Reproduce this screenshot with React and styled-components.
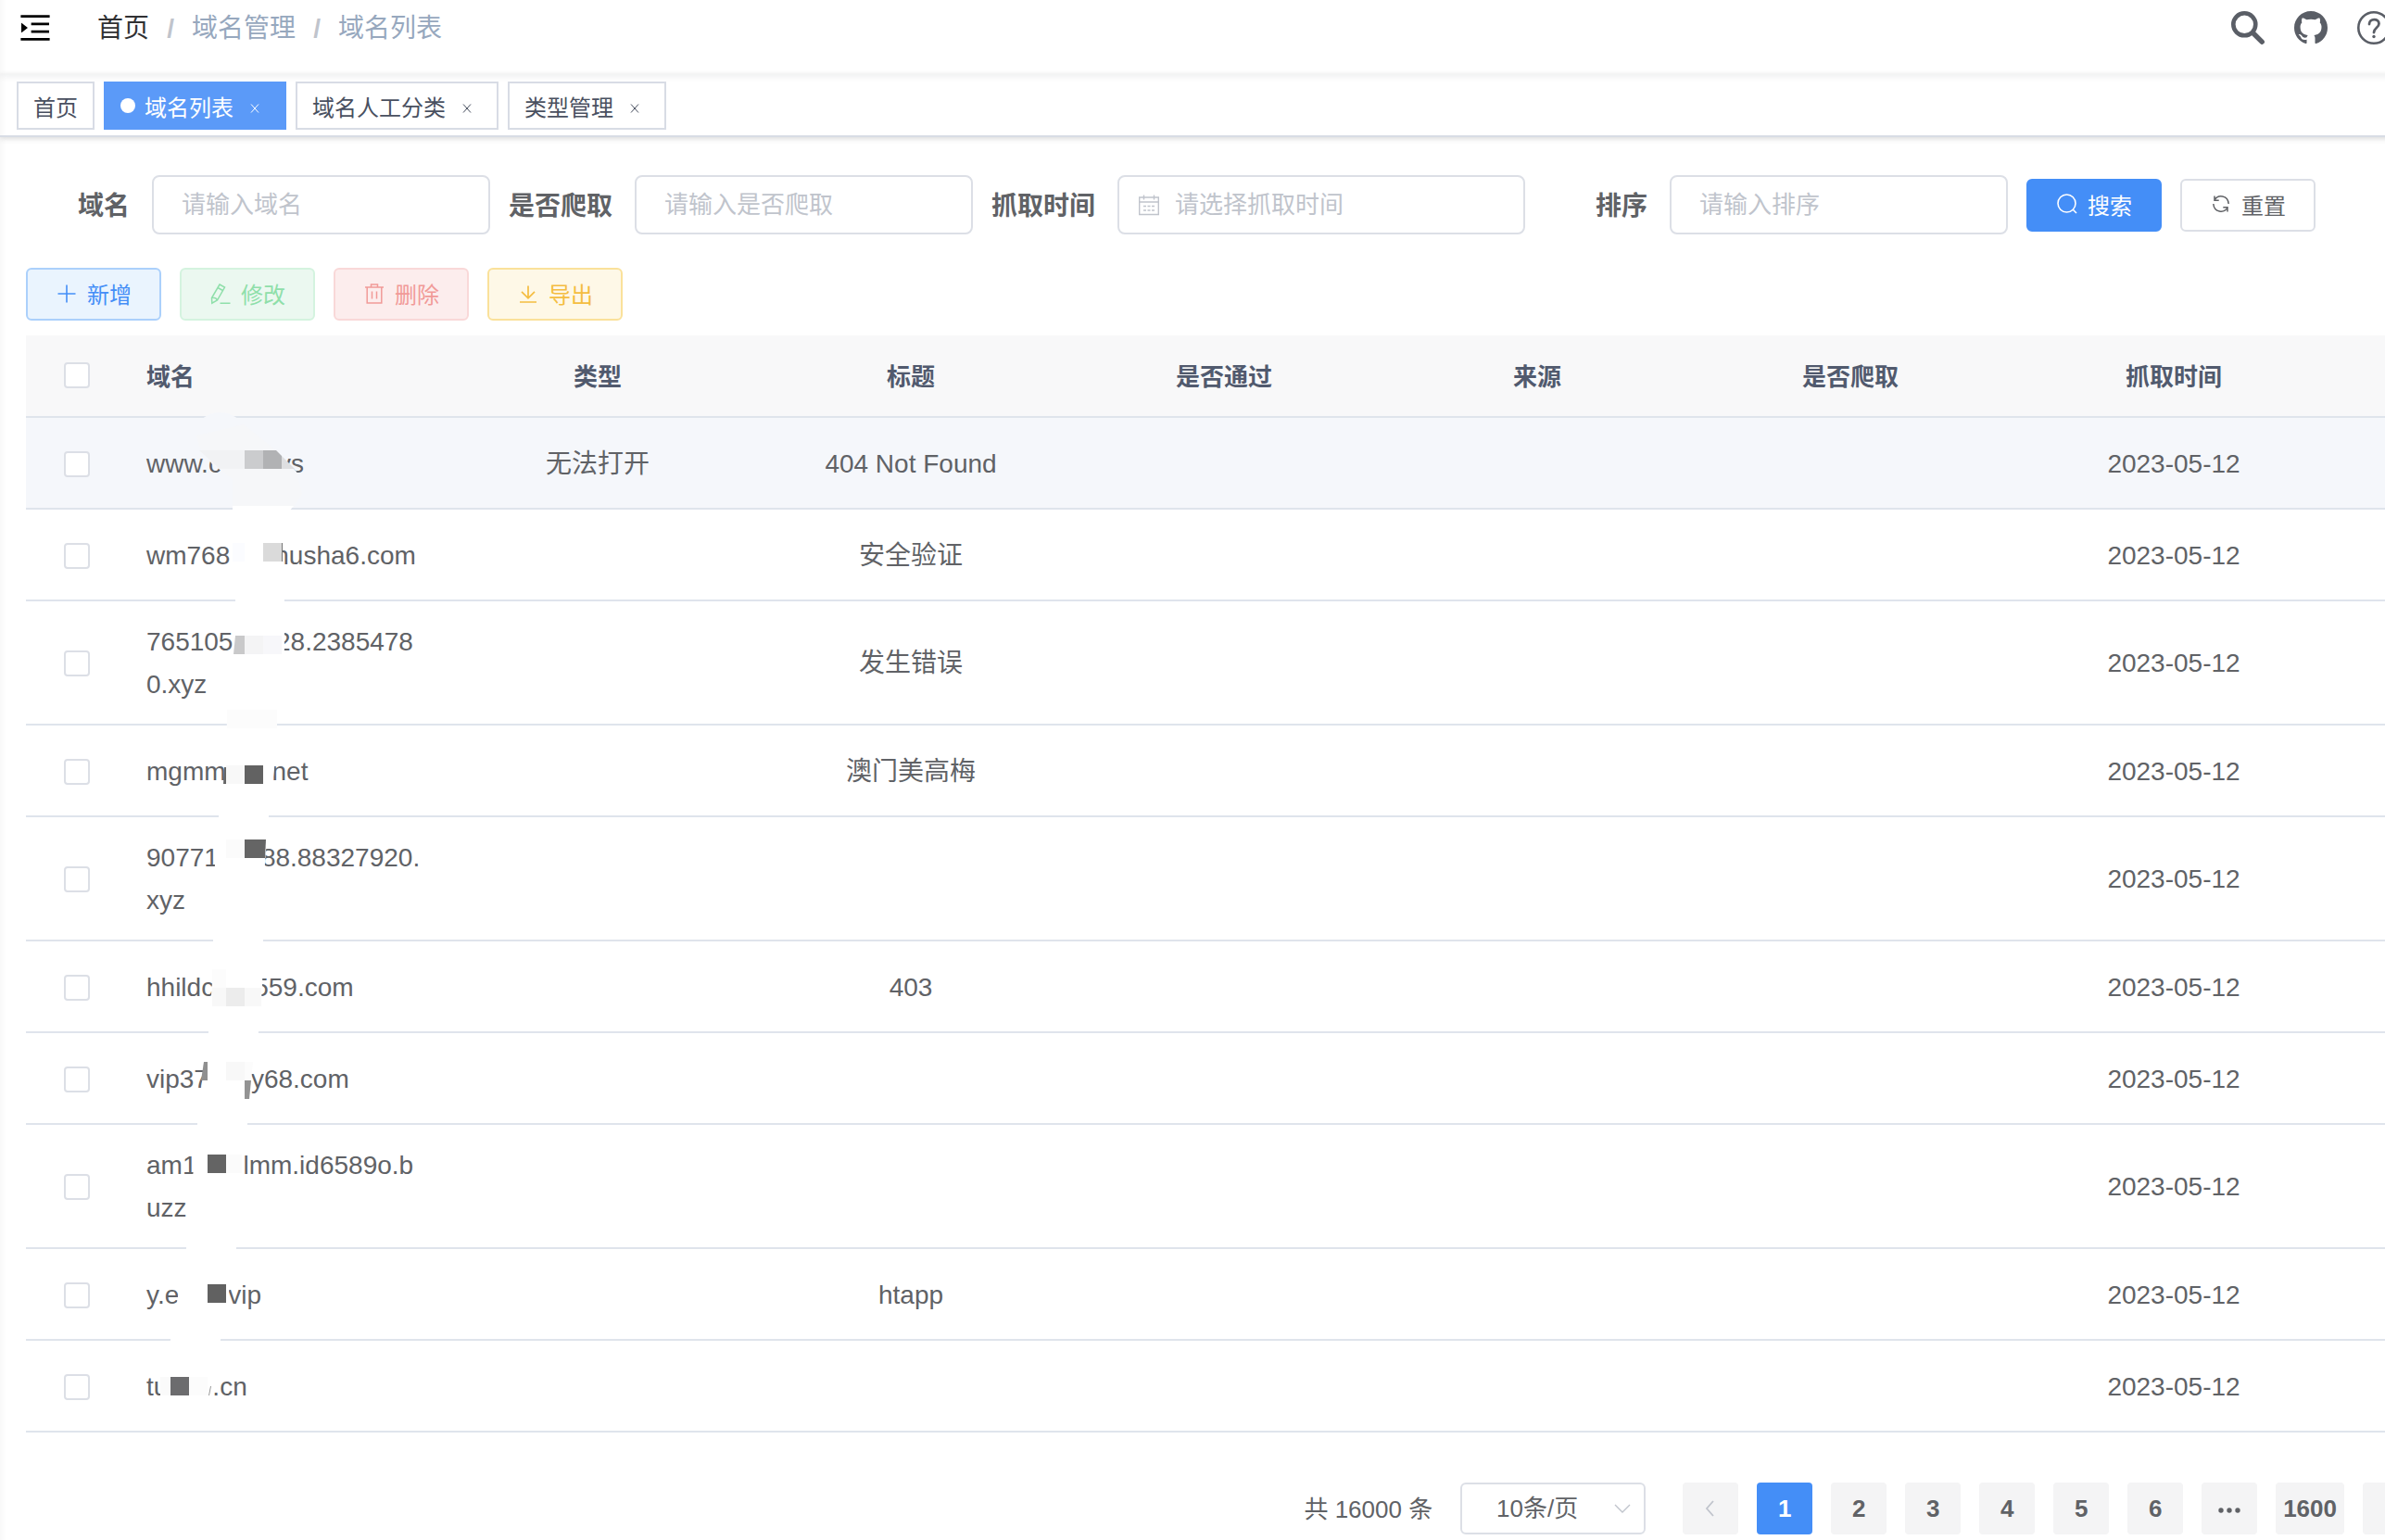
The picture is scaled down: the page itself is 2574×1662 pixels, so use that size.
import { useState } from "react";

import styled, { createGlobalStyle } from "styled-components";

const GlobalStyle = createGlobalStyle`
  * {
    box-sizing: border-box;
  }

  body {
    margin: 0;
    overflow: hidden;
    background-color: #fff;
    color: #606266;
    font-family: "Liberation Sans", "Noto Sans CJK SC", sans-serif;
    font-size: 28px;
  }

  button, input, select {
    font-family: inherit;
  }
`

/* the content is a little wider than the window, the rest is clipped */
const Page = styled.div`
  width: calc(100% + 36px);
  min-height: 100vh;
  box-shadow: inset 8px 0 8px -8px rgba(0, 21, 41, 0.06);
`

const Header = styled.header`
  display: flex;
  align-items: center;
  height: 80px;
  padding: 0 30px 20px 18px;
  box-shadow: 0 2px 8px rgba(0, 21, 41, 0.08);
`

const IconButton = styled.button`
  display: flex;
  padding: 0;
  border: 0;
  background: none;
  color: ${props => props.$color || "#5a5e66"};
  cursor: pointer;
`

const Breadcrumb = styled.nav`
  display: flex;
  flex: 1;
  gap: 18px;
  margin-left: 47px;
  padding-top: 2px;
  line-height: 40px;
`

const Crumb = styled.a`
  color: ${props => (props.$root ? "#303133" : "#97a8be")};
  text-decoration: none;
`

const Separator = styled.span`
  width: 10px;
  text-align: center;
  font-weight: bold;
  color: #c0c4cc;
`

const HeaderTools = styled.div`
  display: flex;
  gap: 32px;
`

const Tabs = styled.nav`
  display: flex;
  gap: 10px;
  height: 68px;
  padding: 8px 18px 0;
  border-bottom: 2px solid #d8dce5;
  box-shadow: 0 2px 6px rgba(0, 0, 0, 0.12), 0 0 6px rgba(0, 0, 0, 0.04);
`

const Tab = styled.div`
  display: flex;
  align-items: center;
  height: 52px;
  padding: 0 16px;
  border: 2px solid ${props => (props.$active ? "#5b9af8" : "#d8dce5")};
  background-color: ${props => (props.$active ? "#5b9af8" : "#fff")};
  color: ${props => (props.$active ? "#fff" : "#495060")};
  font-size: 24px;
`

const TabLink = styled.a`
  color: inherit;
  text-decoration: none;
`

const Dot = styled.span`
  width: 16px;
  height: 16px;
  margin-right: 10px;
  border-radius: 50%;
  background-color: #fff;
`

const TabClose = styled.button`
  display: flex;
  justify-content: center;
  width: 32px;
  margin-left: 7px;
  padding: 6px 0 0;
  border: 0;
  background: none;
  color: inherit;
`

const Main = styled.main`
  padding: 40px 0 6px 28px;
`

const SearchForm = styled.form`
  display: flex;
  align-items: center;
  gap: 20px;
  height: 66px;
  margin-bottom: 35px;
`

const FormItem = styled.div`
  display: flex;
  align-items: center;
`

const Label = styled.label`
  width: 136px;
  padding: 0 24px 2px 0;
  text-align: right;
  font-weight: bold;
  white-space: nowrap;
`

const InputBox = styled.div`
  position: relative;
  width: ${props => (props.$wide ? "440px" : "365px")};
`

const Input = styled.input`
  display: block;
  width: 100%;
  height: 64px;
  padding: 0 30px 0 ${props => (props.$withIcon ? "60px" : "30px")};
  border: 2px solid #dcdfe6;
  border-radius: 8px;
  background-color: #fff;
  color: #606266;
  font-size: 26px;
  outline: 0;

  &::placeholder {
    color: #c0c4cc;
    opacity: 1;
  }
`

const InputIcon = styled.span`
  position: absolute;
  top: 20px;
  left: 22px;
  display: flex;
  color: #c0c4cc;
`

const ButtonRow = styled.div`
  display: flex;
  gap: 20px;
`

const Toolbar = styled(ButtonRow)`
  margin-bottom: 16px;
`

const tones = {
  solid: ["#448ef7", "#448ef7", "#fff"],
  plain: ["#fff", "#dcdfe6", "#606266"],
  primary: ["#eaf4fe", "#abd0fb", "#448ef7"],
  success: ["#ebf8f0", "#d4f3df", "#8fdfaa"],
  danger: ["#fceded", "#f9d8d8", "#f19a98"],
  warning: ["#fef8e7", "#fae19a", "#f4bd41"],
}

const Button = styled.button`
  display: flex;
  align-items: center;
  justify-content: center;
  gap: 10px;
  width: 146px;
  height: 57px;
  padding: 0 0 2px;
  border: 2px solid ${props => tones[props.$tone][1]};
  border-radius: 6px;
  background-color: ${props => tones[props.$tone][0]};
  color: ${props => tones[props.$tone][2]};
  font-size: 24px;
`

const TableWrapper = styled.div`
  position: relative;
`

const Table = styled.table`
  width: 100%;
  table-layout: fixed;
  border-spacing: 0;
`

const Column = styled.col`
  width: ${props => props.$width};
`

const Th = styled.th`
  height: 89px;
  padding: 0 20px 2px;
  border-bottom: 2px solid #dfe4ec;
  background-color: #f8f8f9;
  color: #515a6e;
  font-size: 26px;
  text-align: ${props => props.$align || "center"};
`

const Td = styled.td`
  height: 99px;
  padding: 21px 20px 19px;
  border-bottom: 2px solid #dfe4ec;
  background-color: ${props => (props.$hover ? "#f5f7fb" : "transparent")};
  line-height: 46px;
  text-align: ${props => props.$align || "center"};
`

const Checkbox = styled.input`
  appearance: none;
  display: block;
  width: 28px;
  height: 28px;
  margin: 0 auto;
  border: 2px solid #dcdfe6;
  border-radius: 4px;
  background-color: #fff;

  &:checked {
    border-color: #448ef7;
    background-color: #448ef7;
  }
`

const DomainLine = styled.div`
  display: flex;
  white-space: nowrap;
`

const HiddenPart = styled.span`
  width: ${props => props.$width};
`

const Smear = styled.svg`
  position: absolute;
  top: 78px;
  left: 130px;
  pointer-events: none;
`

const Pagination = styled.div`
  display: flex;
  align-items: center;
  justify-content: flex-end;
  gap: 20px;
  margin-top: 54px;
`

const Total = styled.span`
  margin-right: 10px;
  padding-bottom: 4px;
  font-size: 26px;
`

const SizeBox = styled.div`
  position: relative;
  margin-right: 20px;
`

const SizeSelect = styled.select`
  appearance: none;
  display: block;
  width: 200px;
  height: 56px;
  padding: 0 50px 0 16px;
  border: 2px solid #dcdfe6;
  border-radius: 6px;
  background-color: #fff;
  color: #606266;
  font-size: 26px;
  text-align: center;
  text-align-last: center;
`

const SelectArrow = styled.span`
  position: absolute;
  top: 16px;
  right: 13px;
  display: flex;
  color: #c0c4cc;
  pointer-events: none;
`

const PageButton = styled.button`
  display: flex;
  align-items: center;
  justify-content: center;
  min-width: 60px;
  height: 56px;
  padding: 0 8px;
  border: 0;
  border-radius: 4px;
  background-color: ${props => (props.$active ? "#448ef7" : "#f4f4f5")};
  color: ${props => (props.$active ? "#fff" : props.disabled ? "#c0c4cc" : "#606266")};
  font-size: 26px;
  font-weight: bold;
`

const Icon = ({ size = 24, width = 1.6, children }) => (
  <svg
    width={size}
    height={size}
    viewBox="0 0 24 24"
    fill="none"
    stroke="currentColor"
    strokeWidth={width}
    aria-hidden="true"
  >
    {children}
  </svg>
)

const PlusIcon = () => (
  <Icon><path d="M12 2.500v19M2.500 12h19" /></Icon>
)

const EditIcon = () => (
  <Icon width={1.5}>
    <path d="M11 2l5.500 3L8.500 19l-5.700 3.200L2.500 16.500zM9 5.500l5.500 3M2.700 16.300c2.300-.3 5 .8 5.800 2.700M11.500 22.300h11" />
  </Icon>
)

const DeleteIcon = () => (
  <Icon width={1.5}>
    <path d="M2 5h20M4.200 5v17h15.600V5M8.500 5V2h7v3M9.500 9.500v8M14.500 9.500v8" />
  </Icon>
)

const DownloadIcon = () => (
  <Icon width={1.7}><path d="M12 3.500v13M5 9.800l7 7 7-7M3 21h18" /></Icon>
)

const SearchIcon = () => (
  <Icon width={1.6}>
    <circle cx="11.500" cy="11.500" r="9.500" />
    <path d="M18 18l4 4" />
  </Icon>
)

const RefreshIcon = () => (
  <Icon width={1.5}>
    <path d="M5 8C8.500 1.500 19.500 2.500 20.200 12M5 3.500v4.700h4.700M19 16C15.500 22.500 4.500 21.500 3.800 12M19 20.500v-4.700h-4.700" />
  </Icon>
)

const CalendarIcon = () => (
  <Icon width={1.4}>
    <path d="M1.700 4h20.600v18.500H1.700zM1.700 9h20.600M6.500 1.500v5M17.500 1.500v5" />
    <path d="M6 13.500h3M10.500 13.500h3M15 13.500h3M6 18h3M10.500 18h3M15 18h3" />
  </Icon>
)

const FoldIcon = () => (
  <svg width="40" height="40" viewBox="0 0 1024 1024" fill="currentColor" aria-hidden="true">
    <path d="M408 442h480c4.400 0 8-3.600 8-8v-56c0-4.400-3.600-8-8-8H408c-4.400 0-8 3.600-8 8v56c0 4.400 3.600 8 8 8zm-8 204c0 4.400 3.600 8 8 8h480c4.400 0 8-3.600 8-8v-56c0-4.400-3.600-8-8-8H408c-4.400 0-8 3.600-8 8v56zm504-486H120c-4.400 0-8 3.600-8 8v56c0 4.400 3.600 8 8 8h784c4.400 0 8-3.600 8-8v-56c0-4.400-3.600-8-8-8zm0 632H120c-4.400 0-8 3.600-8 8v56c0 4.400 3.600 8 8 8h784c4.400 0 8-3.600 8-8v-56c0-4.400-3.600-8-8-8zM142.400 642.100L298.700 519a8.840 8.840 0 0 0 0-13.900L142.400 381.900c-5.800-4.600-14.400-.5-14.400 6.900v246.300a8.900 8.900 0 0 0 14.400 7z" />
  </svg>
)

const BoldSearchIcon = () => (
  <svg width="36" height="36" viewBox="0 0 36 36" fill="none" stroke="currentColor" aria-hidden="true">
    <circle cx="14.300" cy="14.300" r="12" strokeWidth="4.600" />
    <path d="M24 24l9.200 9.200" strokeWidth="5.400" strokeLinecap="round" />
  </svg>
)

const GithubIcon = () => (
  <svg width="36" height="36" viewBox="0 0 16 16" fill="currentColor" aria-hidden="true">
    <path d="M8 0C3.580 0 0 3.580 0 8c0 3.540 2.290 6.530 5.470 7.590.4.070.55-.17.55-.38 0-.19-.01-.82-.01-1.490-2.010.37-2.530-.49-2.690-.94-.09-.23-.48-.94-.82-1.130-.28-.15-.68-.52-.01-.53.63-.01 1.080.58 1.230.82.72 1.210 1.870.87 2.330.66.07-.52.28-.87.51-1.070-1.780-.2-3.640-.89-3.640-3.950 0-.87.31-1.590.82-2.150-.08-.2-.36-1.020.08-2.120 0 0 .67-.21 2.200.82.64-.18 1.320-.27 2-.27s1.360.09 2 .27c1.530-1.040 2.200-.82 2.200-.82.44 1.100.16 1.920.08 2.120.51.56.82 1.270.82 2.150 0 3.070-1.870 3.750-3.650 3.950.29.25.54.73.54 1.480 0 1.070-.01 1.930-.01 2.200 0 .21.15.46.55.38A8.010 8.010 0 0 0 16 8c0-4.420-3.580-8-8-8z" />
  </svg>
)

const QuestionIcon = () => (
  <svg width="36" height="36" viewBox="0 0 36 36" fill="none" stroke="currentColor" aria-hidden="true">
    <circle cx="18" cy="18" r="16.700" strokeWidth="2.600" />
    <path d="M13 14c0-6.500 10.500-6.500 10.500-.5 0 4.500-5.500 4.500-5.500 9.500" strokeWidth="2.800" strokeLinecap="round" />
    <circle cx="18" cy="27.500" r="1.700" fill="currentColor" stroke="none" />
  </svg>
)

// mosaic stroke that hides the middle of every domain
const DomainSmear = () => (
  <Smear width="200" height="1084" viewBox="158 440 200 1084" aria-hidden="true">
    <path fill="#f5f7fb" d="M218 452q19-14 39 0l10 20h-55z" />
    <path fill="#f6f7f9" d="M212 470l51-12 35 28 22 23 6 24-9 14h-66v-30l-22-16-14-19z" />
    <path
      fill="#fff"
      d="M251 546h66l-12 14v40l2 50v50l-8 80-3 50-6 51-4 49-2 85-1 51-4 48-9 40-3 59-5 47-7 87-9 53-8 46-9 54-4 20h-52v-30l11-44 8-46 9-53 8-87 4-47 5-43 7-56 4-54 1-45 2-85 4-49 8-41 1-70 7-70 2-52-3-48z"
    />
    <path fill="#f1f2f4" d="M215 486h49v20h-27z" />
    <path fill="#cbccce" d="M264 486h20v20h-20z" />
    <path fill="#b1b2b4" d="M284 486h14l6 6v14h-20z" />
    <path fill="#dedfe1" d="M304 492l14 14h-14z" />
    <path fill="#fbfcff" d="M251 586h13v20h-13z" />
    <path fill="#dadada" d="M284 586h20v20h-20z" />
    <path fill="#777" d="M304 586h1v20h-1z" />
    <path fill="#c9c9ca" d="M254 686h10v20h-12z" />
    <path fill="#f4f4f5" d="M264 686h20v20h-20z" />
    <path fill="#f7f7fa" d="M284 686h20v20h-20z" />
    <path fill="#fcfcfc" d="M245 766h54v20h-54z" />
    <path fill="#666" d="M242 828h2v18h-3z" />
    <path fill="#f8f8f8" d="M244 826h20v20h-20z" />
    <path fill="#626262" d="M264 826h20v20h-20z" />
    <path fill="#fbfbfb" d="M244 906h20v20h-20z" />
    <path fill="#656565" d="M264 906h23l-1 20h-22z" />
    <path fill="#fcfcfc" d="M229 1046h15v20h-15z" />
    <path fill="#f8f8f8" d="M229 1066h53v20h-53z" />
    <path fill="#ececec" d="M244 1066h20v20h-20z" />
    <path fill="#8f8f8f" d="M220 1146h4v20h-7z" />
    <path fill="#f8f8f8" d="M244 1146h20v20h-20z" />
    <path fill="#fcfcfc" d="M264 1146h9l-2 20h-7z" />
    <path fill="#939393" d="M264 1166h7l-2 20h-5z" />
    <path fill="#646464" d="M224 1246h20v20h-20z" />
    <path fill="#fbfbfb" d="M244 1246h17v20h-17z" />
    <path fill="#616161" d="M224 1386h20v20h-20z" />
    <path fill="#fafafa" d="M173 1486h11v20h-11z" />
    <path fill="#6c6c6e" d="M184 1486h20v20h-20z" />
    <path fill="#fcfcfc" d="M204 1486h20v20h-20z" />
    <path fill="#999" d="M227 1496h1l-2 10h-1z" />
  </Smear>
)

const columns = ["类型", "标题", "是否通过", "来源", "是否爬取", "抓取时间"]

const rows = [
  { domain: ["www.c", 61, "vs"], type: "无法打开", title: "404 Not Found" },
  { domain: ["wm768", 48, "husha6.com"], title: "安全验证" },
  { domain: ["7651055", 31, "28.2385478"], rest: "0.xyz", title: "发生错误" },
  { domain: ["mgmm", 50, "net"], title: "澳门美高梅" },
  { domain: ["90771", 46, "88.88327920."], rest: "xyz" },
  { domain: ["hhildc", 43, "559.com"], title: "403" },
  { domain: ["vip37", 46, "y68.com"] },
  { domain: ["am1", 50, "lmm.id6589o.b"], rest: "uzz" },
  { domain: ["y.e", 53, "vip"], title: "htapp" },
  { domain: ["tu", 48, ".cn"] },
]

const pages = ["1", "2", "3", "4", "5", "6", "more", "1600"]

export default function App() {
  const [selected, setSelected] = useState([])
  const [page, setPage] = useState("1")

  const toggleRow = (index) => {
    setSelected(selected.includes(index) ? selected.filter(i => i !== index) : [...selected, index])
  }

  const toggleAll = () => {
    setSelected(selected.length === rows.length ? [] : rows.map((row, index) => index))
  }

  return (
    <>
      <GlobalStyle />
      <Page>
        <Header>
          <IconButton $color="#000" aria-label="菜单"><FoldIcon /></IconButton>
          <Breadcrumb>
            <Crumb href="#" $root>首页</Crumb>
            <Separator>/</Separator>
            <Crumb href="#domain">域名管理</Crumb>
            <Separator>/</Separator>
            <Crumb href="#list">域名列表</Crumb>
          </Breadcrumb>
          <HeaderTools>
            <IconButton aria-label="搜索"><BoldSearchIcon /></IconButton>
            <IconButton aria-label="GitHub"><GithubIcon /></IconButton>
            <IconButton aria-label="帮助"><QuestionIcon /></IconButton>
          </HeaderTools>
        </Header>
        <Tabs>
          <Tab><TabLink href="#">首页</TabLink></Tab>
          {["域名列表", "域名人工分类", "类型管理"].map((name, index) => (
            <Tab key={name} $active={index === 0}>
              {index === 0 && <Dot />}
              <TabLink href="#list">{name}</TabLink>
              <TabClose aria-label={`关闭${name}`}>
                <Icon size={12} width={2}><path d="M4 3l16 18M20 3L4 21" /></Icon>
              </TabClose>
            </Tab>
          ))}
        </Tabs>
        <Main>
          <SearchForm onSubmit={event => event.preventDefault()}>
            <FormItem>
              <Label htmlFor="name">域名</Label>
              <InputBox><Input id="name" placeholder="请输入域名" /></InputBox>
            </FormItem>
            <FormItem>
              <Label htmlFor="crawled">是否爬取</Label>
              <InputBox><Input id="crawled" placeholder="请输入是否爬取" /></InputBox>
            </FormItem>
            <FormItem>
              <Label htmlFor="time">抓取时间</Label>
              <InputBox $wide>
                <Input id="time" placeholder="请选择抓取时间" $withIcon />
                <InputIcon><CalendarIcon /></InputIcon>
              </InputBox>
            </FormItem>
            <FormItem>
              <Label htmlFor="sort">排序</Label>
              <InputBox><Input id="sort" placeholder="请输入排序" /></InputBox>
            </FormItem>
            <ButtonRow>
              <Button type="submit" $tone="solid"><SearchIcon />搜索</Button>
              <Button type="reset" $tone="plain"><RefreshIcon />重置</Button>
            </ButtonRow>
          </SearchForm>
          <Toolbar>
            <Button $tone="primary"><PlusIcon />新增</Button>
            <Button $tone="success" disabled><EditIcon />修改</Button>
            <Button $tone="danger" disabled><DeleteIcon />删除</Button>
            <Button $tone="warning"><DownloadIcon />导出</Button>
          </Toolbar>
          <TableWrapper>
            <Table>
              <colgroup>
                <Column $width="110px" />
                <Column $width="338px" />
                <Column $width="338px" />
                <Column $width="338px" />
                <Column $width="338px" />
                <Column $width="338px" />
                <Column $width="338px" />
                <Column $width="360px" />
                <Column />
              </colgroup>
              <thead>
                <tr>
                  <Th>
                    <Checkbox
                      type="checkbox"
                      aria-label="全选"
                      checked={selected.length === rows.length}
                      onChange={toggleAll}
                    />
                  </Th>
                  <Th $align="left">域名</Th>
                  {columns.map(name => <Th key={name}>{name}</Th>)}
                  <Th />
                </tr>
              </thead>
              <tbody>
                {rows.map(({ domain, rest, type, title }, index) => (
                  <tr key={index}>
                    <Td $hover={index === 0}>
                      <Checkbox
                        type="checkbox"
                        aria-label={`选择第${index + 1}行`}
                        checked={selected.includes(index)}
                        onChange={() => toggleRow(index)}
                      />
                    </Td>
                    <Td $hover={index === 0} $align="left">
                      <DomainLine>
                        {domain[0]}
                        <HiddenPart $width={`${domain[1]}px`} />
                        {domain[2]}
                      </DomainLine>
                      {rest}
                    </Td>
                    <Td $hover={index === 0}>{type}</Td>
                    <Td $hover={index === 0}>{title}</Td>
                    <Td $hover={index === 0} />
                    <Td $hover={index === 0} />
                    <Td $hover={index === 0} />
                    <Td $hover={index === 0}>2023-05-12</Td>
                    <Td $hover={index === 0} />
                  </tr>
                ))}
              </tbody>
            </Table>
            <DomainSmear />
          </TableWrapper>
          <Pagination>
            <Total>共 16000 条</Total>
            <SizeBox>
              <SizeSelect aria-label="每页条数">
                <option>10条/页</option>
              </SizeSelect>
              <SelectArrow><Icon width={1.4}><path d="M4 8l8 8 8-8" /></Icon></SelectArrow>
            </SizeBox>
            <PageButton aria-label="上一页" disabled>
              <Icon width={1.8}><path d="M15 4l-7 8 7 8" /></Icon>
            </PageButton>
            {pages.map(name => (
              <PageButton key={name} $active={name === page} onClick={() => setPage(name)}>
                {name === "more" ? (
                  <Icon>
                    <g fill="currentColor" stroke="none">
                      <circle cx="3" cy="14" r="2.700" />
                      <circle cx="12" cy="14" r="2.700" />
                      <circle cx="21" cy="14" r="2.700" />
                    </g>
                  </Icon>
                ) : name}
              </PageButton>
            ))}
            <PageButton aria-label="下一页">
              <Icon width={1.8}><path d="M9 4l7 8-7 8" /></Icon>
            </PageButton>
          </Pagination>
        </Main>
      </Page>
    </>
  )
}
